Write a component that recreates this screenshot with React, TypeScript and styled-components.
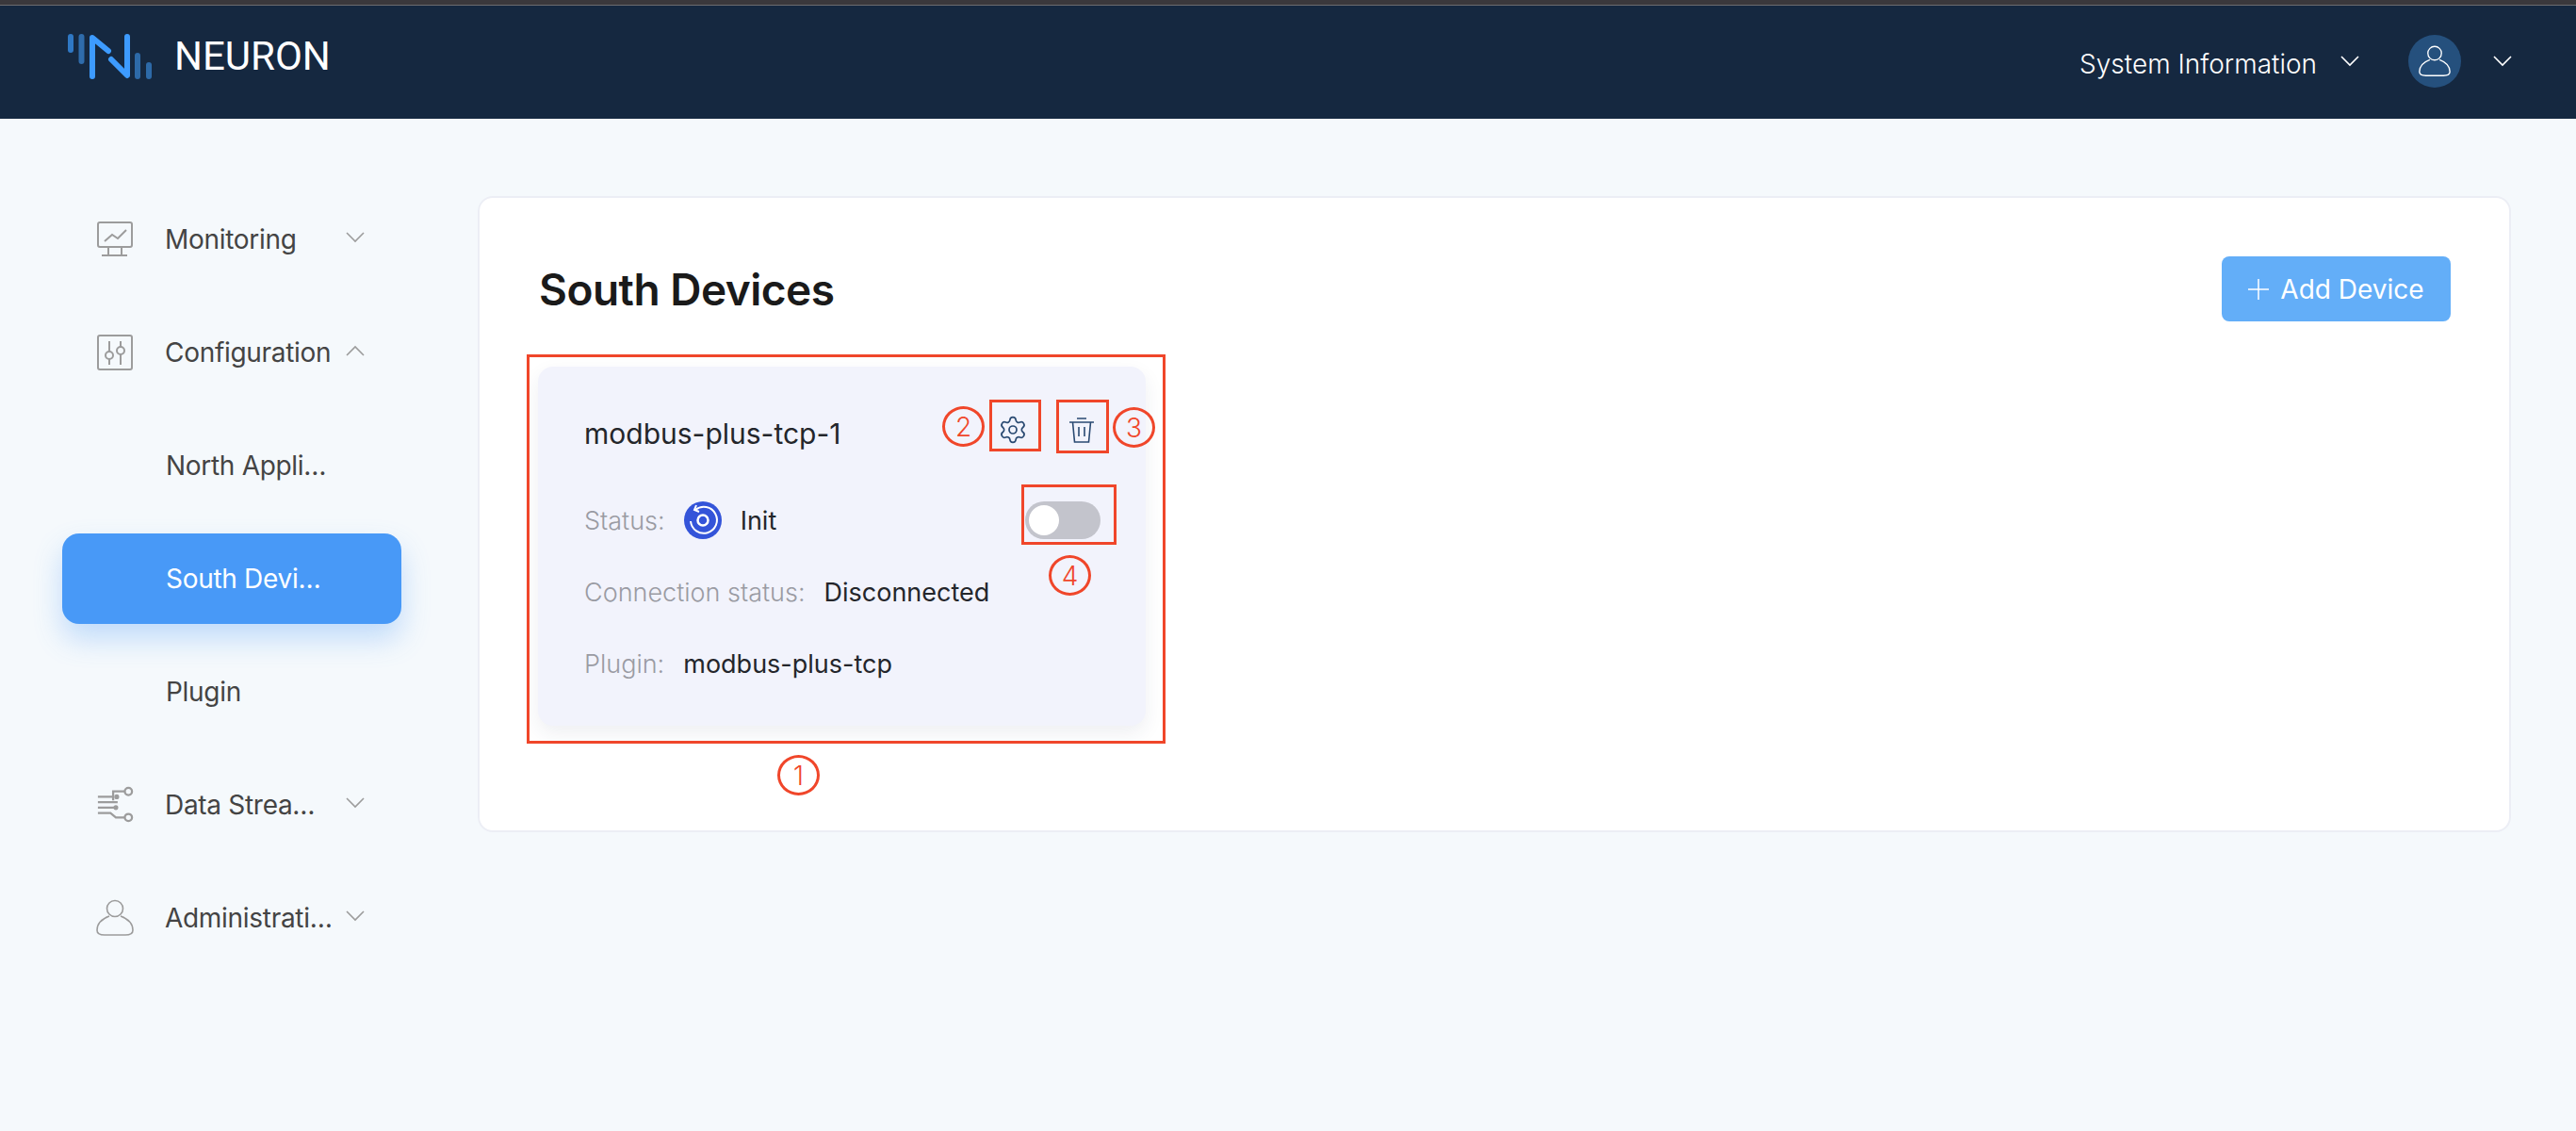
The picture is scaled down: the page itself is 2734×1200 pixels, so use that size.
import styled, { createGlobalStyle } from 'styled-components'
import { Settings } from 'lucide-react'

const GlobalStyle = createGlobalStyle`
  html, body {
    background: #f5f9fc;
    font-family: Inter, "Noto Sans", "Liberation Sans", sans-serif;
    margin: 0;
    padding: 0;
  }
`

const Page = styled.div`
  display: flex;
  flex-direction: column;
  height: 1200px;
  overflow: hidden;
  width: 2734px;
`

const WindowEdge = styled.div`
  background: #3a383c;
  border-bottom: 1px solid #6c6c70;
  height: 5px;
`

const Header = styled.header`
  align-items: center;
  background: #152840;
  display: flex;
  height: 120px;
  justify-content: space-between;
  padding: 0 72px;
`

const Brand = styled.div`
  align-items: center;
  display: flex;
  gap: 24px;
  margin-top: -12px;
`

const BrandName = styled.span`
  color: #fff;
  font-family: Roboto, sans-serif;
  font-size: 42px;
  line-height: 48px;
`

const HeaderTools = styled.div`
  align-items: center;
  display: flex;
  margin-right: -4px;
  margin-top: -2px;
`

const SystemLabel = styled.span`
  color: #fff;
  font-size: 28px;
  font-weight: 300;
  margin-right: 25px;
  margin-top: 6px;
`

const Avatar = styled.div`
  align-items: center;
  background: #25507d;
  border-radius: 50%;
  display: flex;
  height: 56px;
  justify-content: center;
  margin: 0 34px 0 52px;
  width: 56px;
`

const Main = styled.main`
  align-items: flex-start;
  display: flex;
  gap: 81px;
  padding: 80px 0 0 66px;
`

const Menu = styled.nav`
  display: flex;
  flex-direction: column;
  gap: 24px;
  width: 360px;
`

const MenuRow = styled.div<{ $active?: boolean }>`
  align-items: center;
  background: ${({ $active }) => ($active ? '#4899f7' : 'transparent')};
  border-radius: 18px;
  box-shadow: ${({ $active }) => ($active ? '0 16px 30px rgba(72, 153, 247, 0.3)' : 'none')};
  color: ${({ $active }) => ($active ? '#fff' : '#444')};
  display: flex;
  height: 96px;
  padding-left: ${({ $active }) => ($active ? '110px' : '36px')};
`

const SubRow = styled(MenuRow)`
  padding-left: 110px;
`

const MenuIcon = styled.div`
  align-items: center;
  display: flex;
  flex: none;
  justify-content: center;
  margin-right: 33px;
  width: 40px;
`

const MenuLabel = styled.span<{ $width: number }>`
  font-size: 28px;
  letter-spacing: -0.3px;
  overflow: hidden;
  text-overflow: ellipsis;
  white-space: nowrap;
  width: ${({ $width }) => $width}px;
`

const MenuChevron = styled.div`
  display: flex;
  margin-left: 12px;
  margin-top: -4px;
`

const Panel = styled.section`
  background: #fff;
  border: 2px solid #eceef5;
  border-radius: 16px;
  box-sizing: border-box;
  height: 675px;
  margin-top: 2px;
  padding: 62px 62px 0 63px;
  width: 2158px;
`

const PanelHead = styled.div`
  align-items: center;
  display: flex;
  justify-content: space-between;
`

const Title = styled.h1`
  color: #1a1a1a;
  font-size: 46px;
  font-weight: 600;
  letter-spacing: -0.5px;
  margin: 0;
`

const AddButton = styled.button`
  align-items: center;
  background: #63aef8;
  border: 0;
  border-radius: 8px;
  color: #fff;
  display: flex;
  font-family: inherit;
  font-size: 28px;
  gap: 12px;
  height: 69px;
  justify-content: center;
  padding: 0;
  width: 243px;
`

const Card = styled.article`
  background: #f2f3fc;
  border-radius: 16px;
  box-shadow: 0 8px 20px rgba(40, 50, 90, 0.08);
  box-sizing: border-box;
  height: 381px;
  margin: 48px 0 0 -1px;
  padding: 48px 48px 0 49px;
  position: relative;
  width: 645px;
`

const CardHead = styled.div`
  align-items: center;
  display: flex;
  height: 46px;
  justify-content: space-between;
  margin-bottom: 31px;
`

const DeviceName = styled.h2`
  color: #24262b;
  font-size: 30px;
  font-weight: 400;
  margin: 0;
`

const CardActions = styled.div`
  align-items: center;
  display: flex;
  gap: 44px;
  margin-bottom: 8px;
  padding-right: 7px;
`

const InfoRow = styled.div`
  align-items: center;
  display: flex;
  font-size: 27px;
  gap: 20px;
  height: 76px;
`

const InfoLabel = styled.span`
  color: #9a9ba3;
  font-weight: 300;
`

const InfoValue = styled.span`
  color: #24262b;
`

const Switch = styled.div`
  background: #c3c4cc;
  border-radius: 20px;
  box-sizing: border-box;
  height: 40px;
  margin-left: auto;
  padding: 4px;
  width: 80px;
`

const SwitchKnob = styled.div`
  background: #fff;
  border-radius: 50%;
  height: 32px;
  width: 32px;
`

const Callout = styled.div<{ $left: number; $top: number; $w: number; $h: number }>`
  border: 3px solid #f0462a;
  box-sizing: border-box;
  height: ${({ $h }) => $h}px;
  left: ${({ $left }) => $left}px;
  position: absolute;
  top: ${({ $top }) => $top}px;
  width: ${({ $w }) => $w}px;
`

const Marker = styled.div<{ $left: number; $top: number }>`
  align-items: center;
  background: transparent;
  border: 3px solid #f0462a;
  border-radius: 50%;
  box-sizing: border-box;
  color: #f0462a;
  display: flex;
  font-size: 28px;
  font-weight: 300;
  height: 43px;
  justify-content: center;
  left: ${({ $left }) => $left}px;
  position: absolute;
  top: ${({ $top }) => $top}px;
  width: 45px;
`

const Chevron = ({ up, color, size = 20 }: { up?: boolean; color: string; size?: number }) => (
  <svg width={size} height={12} viewBox="0 0 20 12" fill="none" stroke={color} strokeWidth="1.6">
    <path d={up ? 'M1 11L10 2l9 9' : 'M1 1l9 9 9-9'} />
  </svg>
)

const Logo = () => (
  <svg width="89" height="48" viewBox="0 0 89 48" fill="none" strokeLinecap="round" strokeLinejoin="round" strokeWidth="6">
    <path d="M3 3v14" stroke="#2f78c4" />
    <path d="M14.500 3v26" stroke="#2f6cab" />
    <path d="M26 45V4l17 14" stroke="#3d9bff" />
    <path d="M46 27l17 17V3" stroke="#3d9bff" />
    <path d="M74 23v22" stroke="#2d6aa8" />
    <path d="M86 33v12" stroke="#2d6aa8" />
  </svg>
)

const MonitorIcon = () => (
  <svg width="38" height="38" viewBox="0 0 38 38" fill="none" stroke="#9c9c9c" strokeWidth="2">
    <rect x="1" y="1" width="36" height="26" rx="2" />
    <path d="M8 21l8-7 6 4 9-9" />
    <path d="M12 27v8M26 27v8M5 36h27" />
  </svg>
)

const SlidersIcon = () => (
  <svg width="38" height="38" viewBox="0 0 38 38" fill="none" stroke="#9c9c9c" strokeWidth="2">
    <rect x="1" y="1" width="36" height="36" rx="2" />
    <path d="M13 7v11M13 26v6M25 7v6M25 21v11" />
    <circle cx="13" cy="22" r="4" />
    <circle cx="25" cy="17" r="4" />
  </svg>
)

const StreamIcon = () => (
  <svg width="42" height="42" viewBox="0 0 42 42" fill="none" stroke="#9c9c9c" strokeWidth="2.400">
    <circle cx="36" cy="6" r="4" />
    <circle cx="36" cy="35" r="4" />
    <path d="M32 6H19v10M2 12h18M2 18h22M2 24h20M2 30h14l6 5h10" />
    <circle cx="23" cy="12" r="1.500" fill="#9c9c9c" />
    <circle cx="22" cy="24" r="1.500" fill="#9c9c9c" />
  </svg>
)

const UserIcon = ({ color, size }: { color: string; size: number }) => (
  <svg width={size} height={size} viewBox="0 0 40 40" fill="none" stroke={color} strokeWidth="1.600">
    <circle cx="20" cy="10" r="8.500" />
    <path d="M14 18C6 21 1 26 1 33c0 4 4 5 8 5h22c4 0 8-1 8-5 0-7-5-12-13-15" />
  </svg>
)

const TrashIcon = () => (
  <svg width="26" height="27" viewBox="0 0 26 27" fill="none" stroke="#2a4a72" strokeWidth="1.600">
    <path d="M0 5h26M8 1h10M3.500 5l2 21h15l2-21M10 10v10M16 10v10" />
  </svg>
)

const InitIcon = () => (
  <svg width="40" height="40" viewBox="0 0 40 40" fill="none">
    <circle cx="20" cy="20" r="20" fill="#3454d9" />
    <circle cx="20" cy="20" r="5.500" stroke="#fff" strokeWidth="2.500" />
    <path d="M12 9a14 14 0 1 1-5 12" stroke="#fff" strokeWidth="2" />
    <path d="M13 4l-2 5 5 2" stroke="#fff" strokeWidth="2" />
  </svg>
)

export default function App() {
  return (
    <Page>
      <GlobalStyle />
      <WindowEdge />
      <Header>
        <Brand>
          <Logo />
          <BrandName>NEURON</BrandName>
        </Brand>
        <HeaderTools>
          <SystemLabel>System Information</SystemLabel>
          <Chevron color="#fff" />
          <Avatar>
            <UserIcon color="#fff" size={34} />
          </Avatar>
          <Chevron color="#fff" />
        </HeaderTools>
      </Header>
      <Main>
        <Menu>
          <MenuRow>
            <MenuIcon><MonitorIcon /></MenuIcon>
            <MenuLabel $width={180}>Monitoring</MenuLabel>
            <MenuChevron><Chevron color="#9c9c9c" /></MenuChevron>
          </MenuRow>
          <MenuRow>
            <MenuIcon><SlidersIcon /></MenuIcon>
            <MenuLabel $width={180}>Configuration</MenuLabel>
            <MenuChevron><Chevron up color="#9c9c9c" /></MenuChevron>
          </MenuRow>
          <SubRow>
            <MenuLabel $width={180}>North Application</MenuLabel>
          </SubRow>
          <SubRow $active>
            <MenuLabel $width={180}>South Device Management</MenuLabel>
          </SubRow>
          <SubRow>
            <MenuLabel $width={180}>Plugin</MenuLabel>
          </SubRow>
          <MenuRow>
            <MenuIcon><StreamIcon /></MenuIcon>
            <MenuLabel $width={180}>Data Stream Processing</MenuLabel>
            <MenuChevron><Chevron color="#9c9c9c" /></MenuChevron>
          </MenuRow>
          <MenuRow>
            <MenuIcon><UserIcon color="#9c9c9c" size={40} /></MenuIcon>
            <MenuLabel $width={180}>Administration</MenuLabel>
            <MenuChevron><Chevron color="#9c9c9c" /></MenuChevron>
          </MenuRow>
        </Menu>
        <Panel>
          <PanelHead>
            <Title>South Devices</Title>
            <AddButton>
              <svg width="22" height="22" viewBox="0 0 22 22" stroke="#fff" strokeWidth="1.500">
                <path d="M11 0v22M0 11h22" />
              </svg>
              Add Device
            </AddButton>
          </PanelHead>
          <Card>
            <CardHead>
              <DeviceName>modbus-plus-tcp-1</DeviceName>
              <CardActions>
                <Settings size={32} color="#2a4a72" strokeWidth={1.300} />
                <TrashIcon />
              </CardActions>
            </CardHead>
            <InfoRow>
              <InfoLabel>Status:</InfoLabel>
              <InitIcon />
              <InfoValue>Init</InfoValue>
              <Switch><SwitchKnob /></Switch>
            </InfoRow>
            <InfoRow>
              <InfoLabel>Connection status:</InfoLabel>
              <InfoValue>Disconnected</InfoValue>
            </InfoRow>
            <InfoRow>
              <InfoLabel>Plugin:</InfoLabel>
              <InfoValue>modbus-plus-tcp</InfoValue>
            </InfoRow>
            <Callout $left={-12} $top={-13} $w={678} $h={413} />
            <Callout $left={479} $top={35} $w={55} $h={55} />
            <Callout $left={550} $top={35} $w={56} $h={57} />
            <Callout $left={513} $top={125} $w={101} $h={64} />
            <Marker $left={254} $top={412}>1</Marker>
            <Marker $left={429} $top={42}>2</Marker>
            <Marker $left={610} $top={43}>3</Marker>
            <Marker $left={542} $top={200}>4</Marker>
          </Card>
        </Panel>
      </Main>
    </Page>
  )
}
